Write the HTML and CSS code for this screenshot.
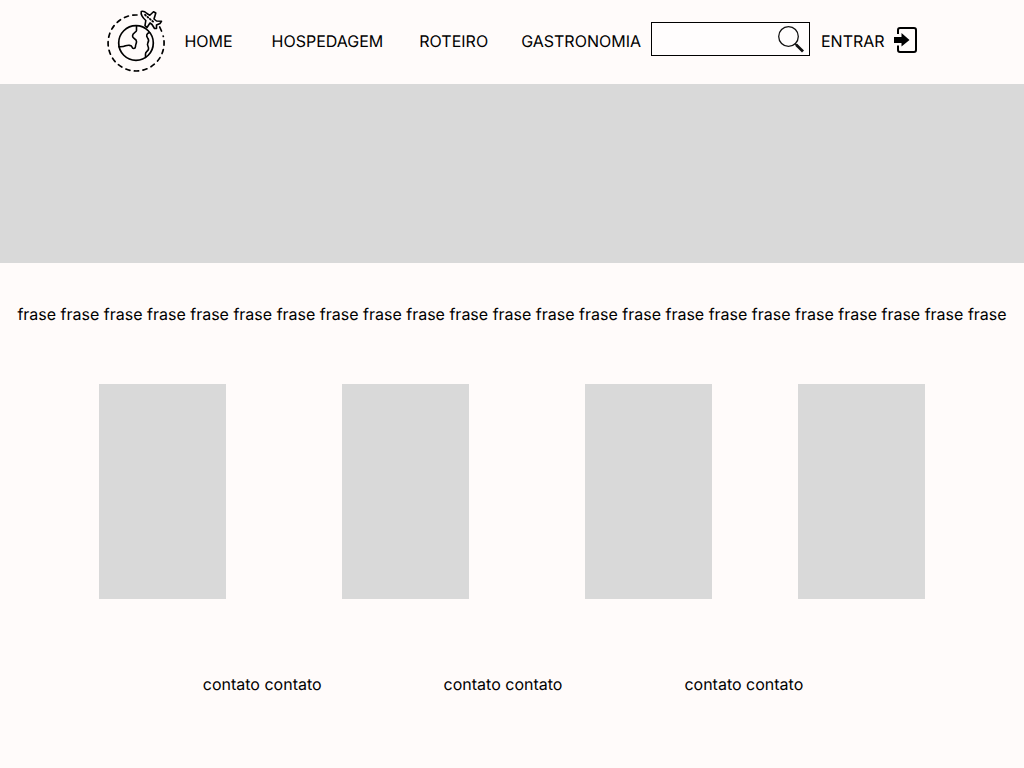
FILE: index.html
```html
<!DOCTYPE html>
<html lang="pt-BR">
<head>
<meta charset="utf-8">
<meta name="viewport" content="width=device-width, initial-scale=1">
<title>Viagens</title>
<link rel="stylesheet" href="styles.css">
</head>
<body>
<header class="header">
  <a class="logo" href="#" aria-label="Início">
    <svg width="60" height="64" viewBox="0 0 60 64" fill="none" stroke="#000" stroke-linecap="round" stroke-linejoin="round">
      <path d="M31 6A28 28 0 1 0 57.200 27" stroke-width="1.700" stroke-dasharray="4.200 4.500"/>
      <path d="M53.700 18L55.500 22" stroke-width="1.700"/>
      <circle cx="30" cy="34" r="17.300" stroke-width="1.700"/>
      <path d="M30.500 16.800V21.500C30.500 23.500 26.500 23.500 26.500 27C26.500 30 30.500 29.500 30.500 32.500C30.500 35 29.500 35 29.500 37.500C29.500 40 26.500 40 26 38C25.500 36 22 36 19.500 36.800C17.500 38 15 37.800 12.900 37.800" stroke-width="1.600"/>
      <path d="M43.500 23.600C40.500 24.500 40 27 41.500 28.800C43 30.500 43 32 41.800 34C40.500 36.500 43 37.500 42.500 40C42 42.500 39.500 42.500 39.500 45V48.500" stroke-width="1.600"/>
      <path d="M35.300 2.500C37.200 1.800 39.300 3 41 4.500L43.800 6.300L47.500 2.700L49.800 4L48 10L50.500 12L55.500 12.300L54 14.500L50.500 16L50.500 19.500L48.500 19.500L46 15.500L44 14L41 18.500L39 16.700L39.800 11.500C37 9 34.500 5.500 35.300 2.500Z" stroke-width="1.600"/>
      <path d="M39 5.800L47.500 13" stroke-width="1.800" stroke-dasharray="1 2.200"/>
    </svg>
  </a>
  <nav class="nav">
    <a class="link" href="#">HOME</a>
    <a class="link hospedagem" href="#">HOSPEDAGEM</a>
    <a class="link roteiro" href="#">ROTEIRO</a>
    <a class="link gastronomia" href="#">GASTRONOMIA</a>
  </nav>
  <form class="search">
    <input class="search-input" type="search" aria-label="Buscar">
    <button class="search-button" type="button" aria-label="Pesquisar">
      <svg width="28" height="28" viewBox="0 0 28 28" fill="none" stroke="#111">
        <circle cx="11.500" cy="11.500" r="9.800" stroke-width="1.300"/>
        <path d="M18 18.500L20.500 21" stroke-width="1.600"/>
        <path d="M19.200 19.700L26 26.500" stroke-width="2.800"/>
      </svg>
    </button>
  </form>
  <a class="link login" href="#">ENTRAR
    <svg width="24" height="28" viewBox="0 0 24 28">
      <path d="M4 7V3Q4 1 6 1H20Q22 1 22 3V23Q22 25 20 25H6Q4 25 4 23V18.500" fill="none" stroke="#000" stroke-width="2"/>
      <path d="M0 10H7.500V6L15.500 13L7.500 19.500V16H0Z" fill="#000"/>
    </svg>
  </a>
</header>
<main>
  <section class="banner"></section>
  <p class="phrase">frase frase frase frase frase frase frase frase frase frase frase frase frase frase frase frase frase frase frase frase frase frase frase</p>
  <section class="gallery">
    <div class="card"></div>
    <div class="card"></div>
    <div class="card"></div>
    <div class="card"></div>
  </section>
</main>
<footer class="footer">
  <span>contato contato</span>
  <span>contato contato</span>
  <span>contato contato</span>
</footer>
</body>
</html>
```

FILE: styles.css
```css
* {
  box-sizing: border-box;
}

body {
  margin: 0;
  background: #fffbfa;
  color: #000;
  font: 16px/20px Inter, sans-serif;
  text-rendering: geometricPrecision;
}

.header {
  display: flex;
  align-items: center;
  justify-content: center;
  min-height: 84px;
  padding-bottom: 2px;
}

.logo,
.search-button {
  display: flex;
}

.nav {
  display: flex;
  margin: 0 10px 0 18px;
}

.link {
  color: inherit;
  text-decoration: none;
}

.hospedagem {
  margin-left: 39px;
}

.roteiro {
  margin-left: 36px;
}

.gastronomia {
  margin-left: 33px;
}

.search {
  display: flex;
  align-items: center;
  width: 159px;
  height: 34px;
  margin-bottom: 4px;
  padding-right: 4px;
  border: 1px solid #000;
  background: #fffdfd;
}

.search-input {
  flex: 1;
  min-width: 0;
  height: 100%;
  padding: 0 8px;
  border: 0;
  outline: 0;
  background: transparent;
  font: inherit;
  appearance: none;
}

.search-button {
  padding: 0;
  border: 0;
  background: transparent;
}

.login {
  display: flex;
  align-items: center;
  gap: 9px;
  margin-left: 11px;
}

.banner {
  height: 179px;
  background: #d9d9d9;
}

.phrase {
  margin: 0;
  padding: 41px 8px 60px;
  text-align: center;
}

.gallery {
  display: flex;
  justify-content: center;
  gap: 116px;
}

.card {
  width: 127px;
  height: 215px;
  background: #d9d9d9;
}

.card:last-child {
  margin-left: -30px;
}

.footer {
  display: flex;
  justify-content: center;
  gap: 122px;
  padding: 75px 18px 73px 0;
}
```
